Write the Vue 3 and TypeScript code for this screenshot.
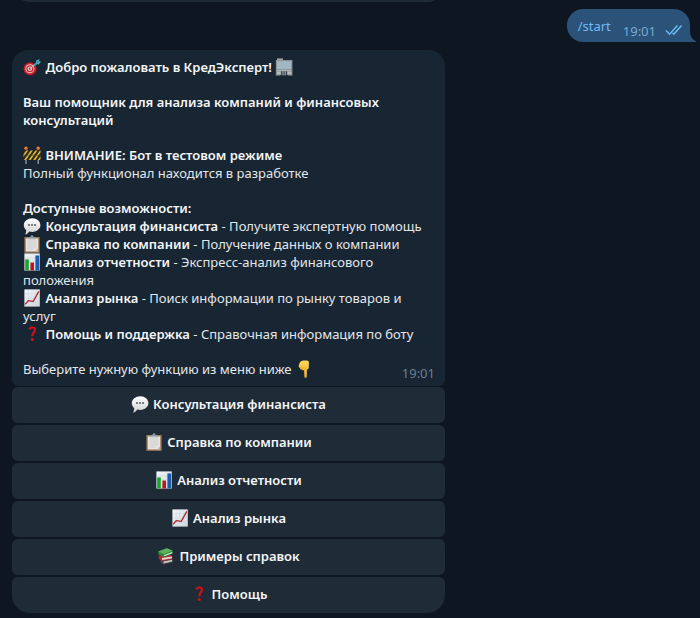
<script setup lang="ts">
interface Feature {
  icon: string
  title: string
  text: string
}

interface Action {
  icon: string
  label: string
}

const features: Feature[] = [
  { icon: 'speech', title: 'Консультация финансиста', text: 'Получите экспертную помощь' },
  { icon: 'clipboard', title: 'Справка по компании', text: 'Получение данных о компании' },
  { icon: 'bars', title: 'Анализ отчетности', text: 'Экспресс-анализ финансового положения' },
  { icon: 'trend', title: 'Анализ рынка', text: 'Поиск информации по рынку товаров и услуг' },
  { icon: 'question', title: 'Помощь и поддержка', text: 'Справочная информация по боту' },
]

const actions: Action[] = [
  { icon: 'speech', label: 'Консультация финансиста' },
  { icon: 'clipboard', label: 'Справка по компании' },
  { icon: 'bars', label: 'Анализ отчетности' },
  { icon: 'trend', label: 'Анализ рынка' },
  { icon: 'books', label: 'Примеры справок' },
  { icon: 'question', label: 'Помощь' },
]
</script>

<template>
  <svg class="sprite" aria-hidden="true">
    <defs>
      <linearGradient id="g-speech" x1="0" y1="0" x2="0" y2="1">
        <stop offset="0" stop-color="#ffffff" />
        <stop offset="1" stop-color="#cfd0d2" />
      </linearGradient>
      <linearGradient id="g-paper" x1="0" y1="0" x2="1" y2="1">
        <stop offset="0" stop-color="#f4f7fa" />
        <stop offset="1" stop-color="#cfd6de" />
      </linearGradient>
      <linearGradient id="g-hand" x1="0" y1="0" x2="0" y2="1">
        <stop offset="0" stop-color="#ffd95a" />
        <stop offset="1" stop-color="#f2ac2c" />
      </linearGradient>
    </defs>

    <symbol id="e-target" viewBox="0 0 18 18">
      <circle cx="7.2" cy="11" r="6.6" fill="#8f1118" />
      <circle cx="6.9" cy="10.7" r="6.2" fill="#c9202a" />
      <circle cx="6.9" cy="10.7" r="4.5" fill="#dcc4c4" />
      <circle cx="6.9" cy="10.7" r="3.5" fill="#c4252e" />
      <circle cx="6.9" cy="10.7" r="2.3" fill="#e6cfcf" />
      <circle cx="6.9" cy="10.7" r="1.1" fill="#c61d26" />
      <path d="M7 10.6 13 5.4" stroke="#b9c4c8" stroke-width="1.1" />
      <path d="M11 7.400 14.600 4.400" stroke="#3a9aa8" stroke-width="2" />
      <path d="M13 5.400 13.200 2.600 16.400 1 16 3.100 18 3.700 15.800 6.400Z" fill="#4fa9b8" />
      <path d="M14 4.800 16.300 3" stroke="#22717d" stroke-width=".6" />
    </symbol>

    <symbol id="e-building" viewBox="0 0 18 18">
      <path d="M.8 2H2V.6h6V2h9.400v15H.8Z" fill="#8a8f92" />
      <path d="M2.200 .8h5.600v1.200H2.200Z" fill="#a9a9a6" />
      <path d="M2 3.200h14.200v8H2Z" fill="#a3b9c6" />
      <path d="M2 5.200h14.200M2 7.200h14.200M2 9.200h14.200" stroke="#97acb9" stroke-width=".4" />
      <path d="M2 11.400h14.200M2 13h14.200" stroke="#7f8a91" stroke-width=".7" />
      <path d="M2 11.800h14.200v.9H2ZM2 13.400h3.600v3.200H2ZM12.600 13.400h3.600v3.200h-3.600Z" fill="#b3bdc2" />
      <path d="M6.200 13.400h5.800v4H6.200Z" fill="#3c454c" />
      <path d="M8 13.400v4M10.200 13.400v4" stroke="#a9bac3" stroke-width=".9" />
      <path d="M.6 17.200h4.800M12.800 17.200h4.800" stroke="#8f9394" stroke-width=".8" />
    </symbol>

    <symbol id="e-barrier" viewBox="0 0 18 18">
      <path d="M3 14v4M15.200 14v4" stroke="#a2a7a9" stroke-width="1.2" />
      <circle cx="3" cy="2.2" r="1.8" fill="#ec6a20" />
      <circle cx="15.200" cy="2.200" r="1.8" fill="#ec6a20" />
      <path d="M2.300 1.800h1M14.500 1.800h1" stroke="#ffc08a" stroke-width=".8" />
      <path d="M.5 4.500h17v9.500H.5Z" fill="#2b2a20" />
      <path d="M.5 8.200 3.200 4.500h2L.5 11ZM1 14 7.800 4.500h2L3 14ZM5.600 14l6.800-9.500h2L7.600 14ZM10.200 14 17 4.500h.5v2L12.200 14ZM14.800 14l2.700-3.800V13l-.7 1Z" fill="#e3bb35" />
      <path d="M.5 9.200h17" stroke="#4b4527" stroke-width=".7" />
    </symbol>

    <symbol id="e-speech" viewBox="0 0 18 18">
      <path d="M9.300 1.200C14 1.200 17.400 4.200 17.400 8s-3.400 6.900-8.100 6.900c-1.100 0-2.200-.2-3.100-.5-.8 1.400-2.200 2.700-4.200 3.100.9-1.100 1.200-2.700 1.100-4.400C1.600 11.800.8 10 .8 8 .8 4.200 4.600 1.200 9.300 1.200Z" fill="url(#g-speech)" />
      <circle cx="6" cy="8" r=".9" fill="#45494d" />
      <circle cx="9" cy="8" r=".9" fill="#45494d" />
      <circle cx="12" cy="8" r=".9" fill="#45494d" />
    </symbol>

    <symbol id="e-clipboard" viewBox="0 0 18 18">
      <path d="M1.400 2h15.200v15.800H1.400Z" fill="#a37c52" />
      <path d="M2.800 3.400h12.400v13H2.800Z" fill="#e6e5e3" />
      <path d="M4.400 6h9.200M4.400 8h9.200M4.400 10h9.200M4.400 12h9.200M4.400 14h6" stroke="#c9c9ca" stroke-width=".9" />
      <path d="M12 16.400 15.200 13v3.400Z" fill="#b8b8b8" />
      <path d="M5 4.200V2.400l2.500-.6C7.600.8 8.200.2 9 .2s1.400.6 1.500 1.600l2.500.6v1.800Z" fill="#8f979d" />
      <path d="M5.400 3.500h7.200" stroke="#c5ccd0" stroke-width=".6" />
    </symbol>

    <symbol id="e-bars" viewBox="0 0 18 18">
      <path d="M1.400 .4h15.400v17.200H1.400Z" fill="url(#g-paper)" />
      <path d="M1.400 5h15.400M1.400 9h15.400M1.400 13h15.400" stroke="#bcc8d3" stroke-width=".5" />
      <path d="M2.200 6.400h3.600v11H2.200Z" fill="#16a62d" />
      <path d="M7.400 9.600H11v7.800H7.400Z" fill="#bd1422" />
      <path d="M12.400 2.400h3.800v15h-3.800Z" fill="#1c5cae" />
    </symbol>

    <symbol id="e-trend" viewBox="0 0 18 18">
      <path d="M1.400 .4h15.400v17.200H1.400Z" fill="url(#g-paper)" />
      <path d="M1.400 4.600h15.400M1.400 9h15.400M1.400 13.400h15.400M5.200.4v17.200M9.100.4v17.200M13 .4v17.200" stroke="#c6d0da" stroke-width=".4" />
      <path d="M2.200 15.400 5.200 11.700 10.200 12.400 15.800 2.400" fill="none" stroke="#b3262f" stroke-width="1.300" stroke-linejoin="round" />
    </symbol>

    <symbol id="e-question" viewBox="0 0 18 18">
      <path d="M6.300 4.300C7.300 2.800 8.400 2.200 9.600 2.400c1.800.2 2.600 1.400 2.300 2.900-.4 2-2.600 2.800-2.600 5.900" fill="none" stroke="#cf1118" stroke-width="2.200" />
      <circle cx="9.300" cy="14.400" r="1.500" fill="#cf1118" />
    </symbol>

    <symbol id="e-books" viewBox="0 0 18 18">
      <path d="M3.400 13 14 11l1.600 1.200v3L6.600 17.400 3.400 15.400Z" fill="#4b4448" />
      <path d="M6.400 14.600 15.200 12.800v1.700L6.600 16.500Z" fill="#c9c5c2" />
      <path d="M1.800 8.600 12.400 7.400l2.800 1.500v3.100L5 14 1.800 11.800Z" fill="#b92c36" />
      <path d="M5 11.100 15 9.400v1.800L5.200 13Z" fill="#e6dad5" />
      <path d="M1.200 4.600 9.800 1.200l5.800 2.300v3.300L7 10.200 1.400 7.400Z" fill="#2c8a3c" />
      <path d="M1.200 4.600 9.800 1.200l5.800 2.300L7 7.200Z" fill="#5fb25d" />
      <path d="M7.200 7.900 15.200 4.900v1.400L7.200 9.300Z" fill="#dfe6d8" />
    </symbol>

    <symbol id="e-hand" viewBox="0 0 18 18">
      <path d="M4.500 3.300C5.200 1.500 6.700.5 8.500.5h3.200c1.500 0 2.300.9 2.200 2.300l-.1 4.600c0 1.300-.8 2-1.900 2l-.1 7c0 .9-.5 1.400-1.200 1.400s-1.200-.5-1.200-1.400L9.100 10.200c-1 .3-1.900 0-2.200-.8-1.100.1-1.900-.5-1.900-1.500C3.900 7.600 3.400 6.700 3.800 5.500Z" fill="url(#g-hand)" />
      <path d="M5 7.900 7.300 6M6.900 9.400 9.300 7M9.100 10.200 11.500 7.300" fill="none" stroke="#c98a1d" stroke-width=".6" />
    </symbol>
  </svg>

  <main class="chat">
    <div class="previous"></div>

    <div class="outgoing">
      <a class="command" href="#start">/start</a>
      <time class="sent">19:01</time>
      <svg class="ticks" viewBox="0 0 18 12" aria-label="Прочитано">
        <path d="M1 6.500 4.600 10.200 12.400 1.500M7.600 9 8.800 10.200 16.600 1.500" />
      </svg>
      <svg class="tail" viewBox="0 0 12 16" aria-hidden="true">
        <path d="M0 0H6V5C6 10 8 13.500 12 15.200V16H0Z" />
      </svg>
    </div>

    <section class="incoming">
      <article class="bubble">
        <p>
          <strong><svg class="emoji"><use href="#e-target" /></svg> Добро пожаловать в КредЭксперт! <svg class="emoji"><use href="#e-building" /></svg></strong>
        </p>
        <p><strong>Ваш помощник для анализа компаний и финансовых консультаций</strong></p>
        <p>
          <strong><svg class="emoji"><use href="#e-barrier" /></svg> ВНИМАНИЕ: Бот в тестовом режиме</strong><br />
          Полный функционал находится в разработке
        </p>
        <div>
          <strong>Доступные возможности:</strong>
          <ul class="features">
            <li v-for="f in features" :key="f.title">
              <svg class="emoji"><use :href="`#e-${f.icon}`" /></svg>
              <strong>{{ ' ' + f.title }}</strong> - {{ f.text }}
            </li>
          </ul>
        </div>
        <div class="closing">
          <p>Выберите нужную функцию из меню ниже <svg class="emoji"><use href="#e-hand" /></svg></p>
          <time class="received">19:01</time>
        </div>
      </article>

      <div class="keyboard">
        <button v-for="a in actions" :key="a.label" type="button" class="key">
          <svg class="emoji"><use :href="`#e-${a.icon}`" /></svg>
          <span>{{ a.label }}</span>
        </button>
      </div>
    </section>
  </main>
</template>

<style>
body {
  background: #0e1621;
}
</style>

<style scoped>
.sprite {
  position: absolute;
  width: 0;
  height: 0;
}

.chat {
  display: flex;
  flex-direction: column;
  padding: 0 10px 5px 12px;
  overflow: hidden;
  color: #e3e7ea;
  font: 13px/18px "Noto Sans", "Open Sans", sans-serif;
}

.previous {
  width: 100%;
  max-width: 433px;
  height: 36px;
  margin-top: -34px;
  border-radius: 6px 6px 18px 18px;
  background: #1f2c38;
}

.outgoing {
  position: relative;
  display: flex;
  align-self: flex-end;
  box-sizing: border-box;
  height: 33px;
  margin: 7px 0 8px;
  padding: 8px 7px 2px 11px;
  border-radius: 16px 16px 0 16px;
  background: #2b5278;
}

.command {
  color: #73b9f5;
  text-decoration: none;
}

.sent {
  align-self: flex-end;
  margin-left: 12px;
  color: #7da8d3;
}

.ticks {
  align-self: flex-end;
  width: 18px;
  height: 12px;
  margin: 0 0 4px 9px;
  fill: none;
  stroke: #6cb8f2;
  stroke-width: 1.6;
}

.tail {
  position: absolute;
  right: -6px;
  bottom: 0;
  width: 12px;
  height: 16px;
  fill: #2b5278;
}

.incoming {
  display: flex;
  flex-direction: column;
  gap: 1px;
  width: 100%;
  max-width: 433px;
}

.bubble {
  display: flex;
  flex-direction: column;
  gap: 17px;
  padding: 8px 10px 4px 11px;
  border-radius: 16px 16px 6px 6px;
  background: #182533;
}

p,
.features {
  margin: 0;
  padding: 0;
}

.features {
  list-style: none;
}

strong {
  color: #f3f5f6;
  font-weight: 600;
}

.emoji {
  width: 18px;
  height: 18px;
  margin-right: 1px;
  vertical-align: top;
}

.closing {
  display: flex;
  justify-content: space-between;
  min-height: 22px;
}

.received {
  align-self: flex-end;
  color: #6d7f8f;
  line-height: 18px;
}

.keyboard {
  display: flex;
  flex-direction: column;
  gap: 2px;
}

.key {
  display: flex;
  align-items: center;
  justify-content: center;
  gap: 3px;
  height: 36px;
  padding: 0 12px 2px;
  border: 0;
  border-radius: 6px;
  background: #1f2c38;
  color: #f3f5f6;
  font: inherit;
  font-weight: 600;
  cursor: pointer;
}

.key:hover {
  background: #263644;
}

.key:last-child {
  border-radius: 6px 6px 18px 18px;
}
</style>
